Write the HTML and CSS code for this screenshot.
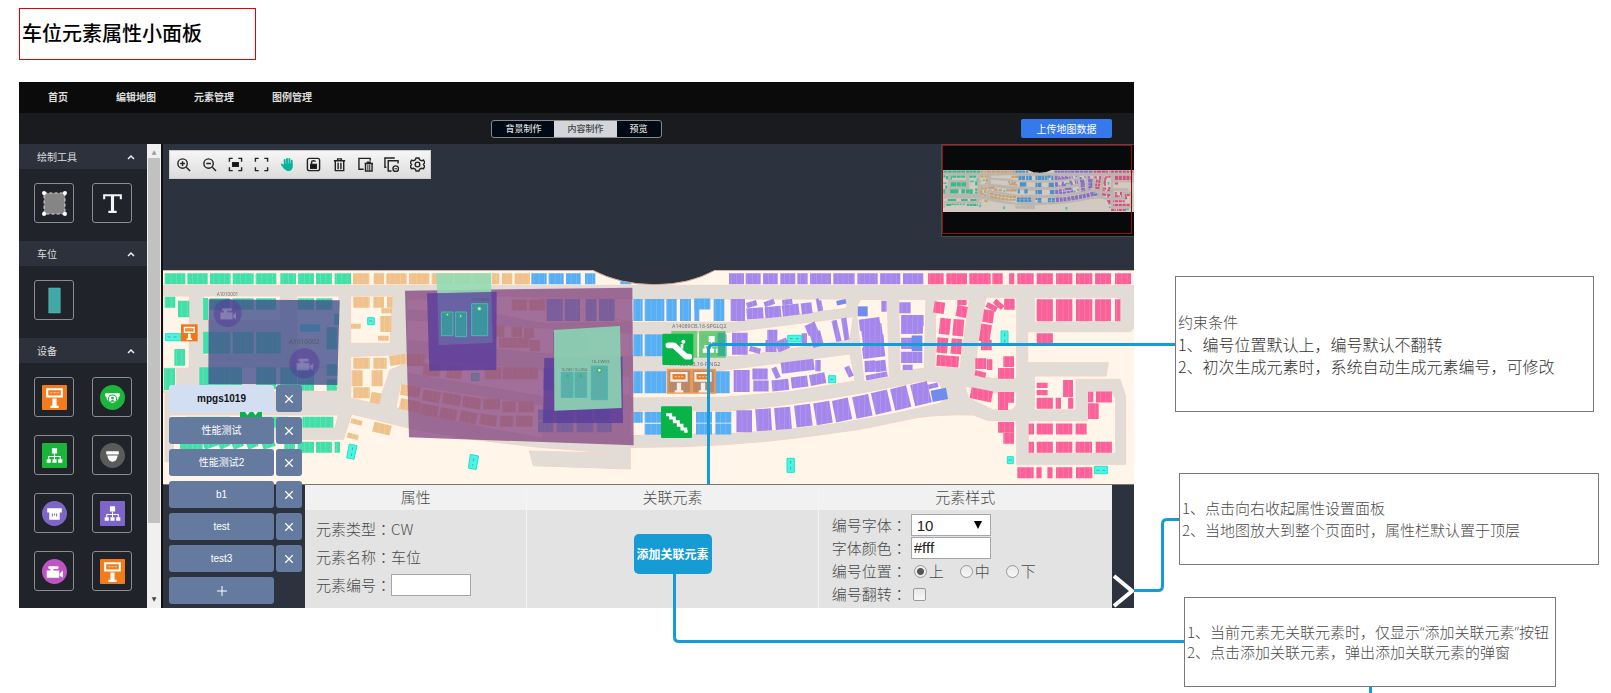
FILE: index.html
```html
<!DOCTYPE html>
<html lang="zh-CN">
<head>
<meta charset="utf-8">
<title>车位元素属性小面板</title>
<link rel="stylesheet" href="styles.css">
</head>
<body>
<svg class="defs" width="0" height="0" aria-hidden="true">
  <defs>
    <pattern id="pg" width="16" height="66" patternUnits="userSpaceOnUse"><path fill="#42e0a8" d="M0 0h16v66H0z"/><path stroke="#6aeabd" stroke-width="2" d="M1 0v66"/></pattern>
    <pattern id="po" width="16" height="66" patternUnits="userSpaceOnUse"><path fill="#efc18b" d="M0 0h16v66H0z"/><path stroke="#f5d0a4" stroke-width="2" d="M1 0v66"/></pattern>
    <pattern id="pb" width="16" height="66" patternUnits="userSpaceOnUse"><path fill="#58aef3" d="M0 0h16v66H0z"/><path stroke="#78c2f8" stroke-width="2" d="M1 0v66"/></pattern>
    <pattern id="pv" width="16" height="66" patternUnits="userSpaceOnUse"><path fill="#a587ec" d="M0 0h16v66H0z"/><path stroke="#b79df2" stroke-width="2" d="M1 0v66"/></pattern>
    <pattern id="pk" width="16" height="66" patternUnits="userSpaceOnUse"><path fill="#fa6199" d="M0 0h16v66H0z"/><path stroke="#fd82ae" stroke-width="2" d="M1 0v66"/></pattern>
  </defs>

  <symbol id="kiosk" viewBox="0 0 24 24">
    <path fill="#fff" d="M4 3h16v9H4zM10 13h4v7h-4zM8 20h8v2H8z"/>
    <path fill="#f27b1c" d="M6 5h12v5H6z"/><path fill="none" stroke="#fbd3ad" stroke-dasharray="2 1" d="M8 7.500h8"/>
  </symbol>
  <symbol id="network" viewBox="0 0 24 24">
    <path fill="#fff" d="M9.500 5h5v5h-5zM4.500 15.500h4v3.500h-4zM10 15.500h4v3.500h-4zM15.500 15.500h4v3.500h-4z"/>
    <path fill="none" stroke="#fff" d="M12 10v6M6.500 16v-3h11v3"/>
  </symbol>
  <symbol id="camera" viewBox="0 0 24 24">
    <path fill="#fff" d="M4.500 11h12v7h-12zM17 14l3-3v7l-3-2zM8 9h3v2H8z"/><rect x="6" y="7" width="10" height="2.500" rx="1" fill="#fff"/>
  </symbol>

  <symbol id="site" viewBox="9 30 2913 642" preserveAspectRatio="none">
    <path fill="#fff5e8" d="M9 30h2913v642H9z"/>
    <path class="road" d="M9 76H2922V195Q2920 215 2905 215H2603V308H2845L2838 348H2623V450H2748V358H2880L2897 410V613H2570V482H2485L2440 465Q2350 462 2270 473L2100 508L1940 530Q1700 562 1440 562H1411V627L1120 617L1108 573L1360 580L1120 560L950 540L750 505L575 462L550 538H40V605H15V397H9z"/>
    <g class="block">
      <path d="M9 108H88V325H9zM9 325H50V395H9zM130 108H362V182H130zM130 215H350L362 250V285H130zM118 322H535V395H118zM410 108H537V395H410zM30 465H535L525 505H30zM572 108H698L690 250H572zM572 290L740 283L720 318L690 330L655 433L572 415z"/>
      <path d="M722 372L740 373L1150 435V535L980 505L708 443zM740 118L1040 108L1420 117V187L1140 190L1020 165L740 150zM740 180L1420 220V290L1130 280L740 240zM740 290L1150 330L1430 350V405L1150 410L740 340z"/>
      <g transform="translate(1440)">
        <path d="M-300 117H620V145L280 187H-30zM-30 220H240L640 170L630 240L290 290H-30zM-30 333H230L630 282L645 363L450 395L250 412L-30 414zM-30 452H280Q560 425 850 362L895 365L920 410L900 430Q600 505 290 520L-30 527zM662 118H742L748 352L672 365L650 170V140z"/>
      </g>
      <g transform="translate(2100)">
        <path d="M116 118H198L193 325L120 333zM228 118H328L300 325L225 322zM378 112H470V355H395L345 345L355 230zM315 378L400 397H470V435L455 450H400L325 415zM523 112H780V187H523zM683 395H755L767 415V580H505V482H683z"/>
      </g>
    </g>
    <path fill="none" stroke="#f3cfc8" stroke-width="2" stroke-dasharray="12 6" d="M555 295v100M1115 596l240 10q35 0 37-34M2388 380l10 35"/>

    <g fill="none" stroke="url(#pg)">
      <path stroke-width="33" d="M14 56h62m6 0h61m7 0h62m6 0h63m6 0h62m12 0h47m6 0h48m6 0h48m8 0h49M14 127h32M60 562h68M373 562h32m8 0h49m6 0h48m8 0h16M427 487h93M285 487h100M80 487h130"/>
      <path stroke-width="50" d="M54 147h34M43 292h32"/>
      <path stroke-width="66" d="M12 358h33M129 248h82m7 0h63m7 0h74M129 147h15M118 355h128m42 0h60m13 0h50M500 235h32"/>
      <path stroke-width="34" d="M150 132h60m8 0h63m7 0h60m65 0h49m7 0h48M413 375h49m38 0h32M500 330h32M523 178h14M413 340h49"/>
      <path stroke-width="20" d="M132 560l40-14m6 14l30-14m10 14l30-12m14 12l30-12m16 12l36-12"/>
    </g>
    <g fill="none" stroke="url(#po)">
      <path stroke-width="33" d="M579 56h49m13 0h31m7 0h61m7 0h61m7 0h64m4 0h51m4 0h54m4 0h22m8 0h31m7 0h46M580 127h49m11 0h32m9 0h16M580 310h49M580 398h49M640 310h40M1055 135h45m8 0h48"/>
      <path stroke-width="48" d="M575 355h33m27 0h33M661 192h33"/>
      <path stroke-width="15" d="M664 152h32M573 199h29M654 235h32M573 482l33 8M562 525l33 8"/>
      <path stroke-width="30" d="M640 500l52 12M689 303l49-7M650 398l-6 32M1018 197v34M1054 216h32M1107 205v28M1017 248h92M1125 240v34"/>
      <path stroke-width="33" d="M722 388l58 10M720 430l59 12M788 404l52 10M780 446l54 10M848 413l54 10M840 457l50 10M908 423l54 10M900 467l50 10M970 432h50M960 476l50 8M1027 440h40m8 0h48M1020 484h40m8 0h50"/>
      <path stroke-width="36" d="M740 300h54M790 328l50 5M860 336l46 4M974 340h50m4 0h106"/>
    </g>
    <g fill="none" stroke="url(#pb)">
      <path stroke-width="33" d="M1114 56h46m6 0h45m7 0h44m13 0h31m75 0h33M1603 132h48M1420 472h28m6 0h56m-56 36h56M1608 472h48m10 0h48M1608 507h48m10 0h48M1134 465h46m10 0h50m10 0h45m10 0h45M1134 500h46m10 0h50m10 0h50m10 0h45"/>
      <path stroke-width="66" d="M1160 150h48m6 0h46m17 0h32m8 0h47M1420 150h28m6 0h59m6 0h31m10 0h33m10 0h15M1661 150h32M1420 256h28m6 0h56m110 0h80M1420 367h28m6 0h65m120 0h70M1150 357h30m70 0h50M1180 250h100"/>
    </g>
    <g transform="translate(1440)" fill="none" stroke="url(#pv)">
      <path stroke-width="33" d="M267 56h45m5 0h45m7 0h44m8 0h45m6 0h31m7 0h63m7 0h64m8 0h61m7 0h61m8 0h61M320 162l50-4M375 158l48-4M427 153l50-6M484 147l32-4"/>
      <path stroke-width="66" d="M272 150h43M276 251h47M281 363h48M289 484h47M348 481l46-3M405 477l48-4M466 470l48-6M525 463l48-8M582 455l48-10M643 444l48-10M700 432l48-11M758 420l48-12"/>
      <path stroke-width="66" d="M818 407l50-12"/>
      <path stroke-width="16" d="M320 137l30-9M373 134l30-10M427 128l30-4M329 265l32 9M538 121l-2 1l6 31M582 181l15 63M611 174l10 66M493 220v30M401 323l14 31M534 300v34M620 320l14 30M678 354l64-12M732 122v33M788 322l30 0"/>
      <path stroke-width="33" d="M382 226h30M393 240v36M410 262l34-14M500 213l30-13M524 215l12 45M337 342h46M340 378h46M424 325l98-12M396 378l50-5M454 369l49-6M510 362l46-9M778 143h34M783 205h54"/>
      <path stroke-width="34" d="M658 196l62-8M664 214l62-8M668 246l64-6M668 280l66-8M674 320l32-2M706 320l32-4M783 182h68M783 204h66M783 250h34M783 292h64"/>
    </g>
    <g fill="none" stroke="#718cec">
      <path stroke-width="14" d="M2030 130l28-6"/><path stroke-width="30" d="M2093 154h30"/><path stroke-width="47" d="M2255 250h32"/><path stroke-width="34" d="M2315 409l46-9"/>
    </g>
    <path fill="none" stroke="url(#pv)" stroke-width="14" d="M2302 382l32-8"/>
    <g transform="translate(2100)" fill="none" stroke="url(#pk)">
      <path stroke-width="33" d="M204 56h47m8 0h62m7 0h64m5 0h31m19 0h16m9 0h49m9 0h49m9 0h49m11 0h49m8 0h48m12 0h48M432 133h32M530 236h49M530 430h49m8 0h16m21 0h16M506 507h16m8 0h49m9 0h49m10 0h33M506 562h16m8 0h49m9 0h49m10 0h49m11 0h49M472 638h49m8 0h16m17 0h16m10 0h49m11 0h49M708 411h48M230 301l66 5M332 398l64 13"/>
      <path stroke-width="66" d="M530 151h49m9 0h49m11 0h49m8 0h48m12 0h16"/>
      <path stroke-width="32" d="M240 126l-5 34M308 138l-6 33M257 175l-5 48M297 178l-4 50M249 233l-4 46M291 236l-4 46M388 150l-6 38M380 193l-8 52M363 255h32M346 311h33M381 314h16M430 305h32M414 340h48M414 412h48M414 434h30M414 502h48M430 535h32M609 376h30M609 395h30M700 430v47M684 411h16"/>
      <path stroke-width="16" d="M292 128h28M380 133l30 16M404 122l24 22M345 338l32 8M530 376h33M530 398h33"/>
    </g>
    <g fill="#48f6e2" stroke="#20e4d0" stroke-width="3">
      <path d="M16 221h47v21H16zM623 173h20v21h-20zM422 195h56v18h-56zM568 552l23 5-9 41-22-5zM931 583l25 5-8 41-23-5zM1883 226h41v20h-41zM2006 347h21v21h-21zM1881 595h22v42h-22zM2523 213h21v38h-21zM2542 590h18v21h-18zM2803 619h39v22h-39zM935 340h22v22h-22z"/>
    </g>
    <path fill="none" stroke="#52a6b4" stroke-width="3" stroke-dasharray="9 9" d="M23 231h38M628 183h10M578 562l-4 26M942 595l-5 22M1889 236h30M2011 358h12M1892 602v30M2534 220v28M2546 600h12M2809 631h30"/>
  </symbol>
</svg>

<main class="board">
  <h1 class="board-title">车位元素属性小面板</h1>
  <div class="stage">
    <section class="app">
      <nav class="topnav">
        <a href="#">首页</a><a href="#">编辑地图</a><a href="#">元素管理</a><a href="#">图例管理</a>
      </nav>
      <div class="subbar">
        <div class="segments">
          <button type="button">背景制作</button><button type="button" class="on">内容制作</button><button type="button">预览</button>
        </div>
        <button type="button" class="upload">上传地图数据</button>
      </div>
      <div class="workspace">
        <aside class="sidebar">
          <h2>绘制工具 <svg viewBox="0 0 8 6"><path d="M1 5l3-3 3 3"/></svg></h2>
          <div class="tools">
            <button type="button" aria-label="区域"><svg viewBox="0 0 24 24"><path fill="#858585" d="M2 2h20v20H2z"/><path fill="none" stroke="#ddd" stroke-dasharray="3 2" d="M2 2h20v20H2z"/><g fill="#fff"><circle cx="2" cy="2" r="2"/><circle cx="22" cy="2" r="2"/><circle cx="2" cy="22" r="2"/><circle cx="22" cy="22" r="2"/></g></svg></button>
            <button type="button" aria-label="文本"><svg viewBox="0 0 24 24"><path fill="none" stroke="#f4f4f4" stroke-width="2" d="M4 8V4h16v4M8 20h8"/><path stroke="#f4f4f4" stroke-width="3" d="M12 4v16"/></svg></button>
          </div>
          <h2>车位 <svg viewBox="0 0 8 6"><path d="M1 5l3-3 3 3"/></svg></h2>
          <div class="tools">
            <button type="button" aria-label="车位"><svg viewBox="0 0 26 26"><path fill="#40a9a6" stroke="#66c6c2" stroke-width=".5" d="M7 0h12v26H7z"/></svg></button>
          </div>
          <h2>设备 <svg viewBox="0 0 8 6"><path d="M1 5l3-3 3 3"/></svg></h2>
          <div class="tools devices">
            <button type="button" aria-label="查询机"><svg viewBox="0 0 24 24"><rect width="24" height="24" rx="1" fill="#f27b1c"/><use href="#kiosk"/></svg></button>
            <button type="button" aria-label="球机"><svg viewBox="0 0 24 24"><circle cx="12" cy="12" r="12" fill="#1cb53c"/><path fill="#fff" d="M5 8h14v3h-1a6 6 0 0 1-12 0H5z"/><circle cx="12" cy="13.500" r="4" fill="#fff" stroke="#1cb53c"/><circle cx="12" cy="12.500" r="1.300" fill="#1cb53c"/><path fill="#1cb53c" d="M9.500 16q2.500-3 5 0z"/></svg></button>
            <button type="button" aria-label="网络设备"><svg viewBox="0 0 24 24"><rect width="24" height="24" rx="1" fill="#1cb53c"/><use href="#network"/></svg></button>
            <button type="button" aria-label="半球"><svg viewBox="0 0 24 24"><circle cx="12" cy="12" r="12" fill="#5b5b5b"/><path fill="#fff" d="M6 8h12v3H6zM7 12h10q-1 6-5 6t-5-6z"/></svg></button>
            <button type="button" aria-label="探测器"><svg viewBox="0 0 24 24"><circle cx="12" cy="12" r="12" fill="#7e66c8"/><path fill="#fff" d="M5 7h14v4H5zM7 11h10v7H7z"/><path stroke="#7e66c8" d="M10 12v3M12 12v2M14 12v3"/></svg></button>
            <button type="button" aria-label="交换机"><svg viewBox="0 0 24 24"><rect width="24" height="24" rx="1" fill="#7e66c8"/><use href="#network"/></svg></button>
            <button type="button" aria-label="摄像机"><svg viewBox="0 0 24 24"><circle cx="12" cy="12" r="12" fill="#bd56c4"/><use href="#camera"/></svg></button>
            <button type="button" aria-label="缴费机"><svg viewBox="0 0 24 24"><rect width="24" height="24" rx="1" fill="#f27b1c"/><use href="#kiosk"/></svg></button>
          </div>
        </aside>
        <div class="scrollbar"><span class="arrow">▲</span><span class="thumb"></span><span class="rail"></span><span class="arrow down">▼</span></div>

        <div class="canvas">
          <div class="canvas-top">
            <div class="toolbar">
              <button type="button" aria-label="放大"><svg viewBox="0 0 16 16"><circle cx="7" cy="7" r="5"/><path d="M11 11l4 4M4.500 7h5M7 4.500v5"/></svg></button>
              <button type="button" aria-label="缩小"><svg viewBox="0 0 16 16"><circle cx="7" cy="7" r="5"/><path d="M11 11l4 4M4.500 7h5"/></svg></button>
              <button type="button" aria-label="适应"><svg viewBox="0 0 16 16"><path d="M1.500 5V1.500H5M11 1.500h3.500V5M14.500 11v3.500H11M5 14.500H1.500V11"/><path fill="#111" d="M5 6h6v4H5z"/></svg></button>
              <button type="button" aria-label="全屏"><svg viewBox="0 0 16 16"><path d="M1.500 5V1.500H5M11 1.500h3.500V5M14.500 11v3.500H11M5 14.500H1.500V11"/></svg></button>
              <button type="button" aria-label="移动"><svg viewBox="0 0 16 16"><path stroke="#08b39c" stroke-width="2" stroke-linecap="round" d="M5 9V3M7.500 9V2M10 9V2M12.500 9V4M2 8l3 4"/><path fill="#08b39c" stroke="none" d="M4 7h9.500v4q-1 4-4 4H8q-3-1-4-4z"/></svg></button>
              <button type="button" aria-label="锁定"><svg viewBox="0 0 16 16"><rect x="1.500" y="1.500" width="13" height="13" rx="2"/><path fill="#111" d="M5 8h6v4H5z"/><path d="M6 8V5q0-1 2-1t2 1"/></svg></button>
              <button type="button" aria-label="删除"><svg viewBox="0 0 16 16"><path d="M2 4h12M6 4V2h4v2M3.500 4v10.500h9V4M6.500 6v7M9.500 6v7"/></svg></button>
              <button type="button" aria-label="删除区域"><svg viewBox="0 0 16 16"><path d="M13 4V1.500H1V13h5M7 7h9M10 7V5.500h3V7M8 7v8h7V7"/><path stroke-width="1" d="M10.500 8v6M12.500 8v6"/></svg></button>
              <button type="button" aria-label="移除图层"><svg viewBox="0 0 16 16"><path d="M2.500 11H1V1h10.500M15 7V4H4.500v11H8"/><circle cx="12.500" cy="12.500" r="3"/><path stroke-width="1" d="M11 12.500h3"/></svg></button>
              <button type="button" aria-label="设置"><svg viewBox="0 0 16 16"><path d="M6.500 1h3l.7 2 2.300.9 2-.5 1.200 2.500L14.300 8l1.400 2-1.300 2.400-2.200-.3-2 .9-.7 2h-3l-.8-2-2-.9-2.200.3L.3 10l1.400-2L.3 6l1.300-2.500 2.100.5 2-1z"/><circle cx="8" cy="8" r="2.500"/></svg></button>
            </div>
          </div>
          <svg class="site" viewBox="9 30 2913 642">
            <use href="#site" x="9" y="30" width="2913" height="642"/>
            <path fill="#2c323e" d="M1298 30Q1380 73 1484 73T1665 30z"/>
            <path fill="none" stroke="#c9a49a" stroke-width="3" d="M9 31H1298Q1380 74 1484 74T1665 31H2922"/>
            <path fill="#43508c" opacity=".8" d="M146 118l393 3-7 254-387-3z"/>
            <g opacity=".55"><circle cx="203" cy="159" r="42" fill="#5a3d9b"/><circle cx="433" cy="310" r="45" fill="#5a3d9b"/><g opacity=".4"><use href="#camera" x="168" y="124" width="72" height="72"/><use href="#camera" x="396" y="274" width="76" height="76"/></g></g>
            <g class="map-label"><text x="170" y="107" font-size="14">A1010001</text><text x="386" y="252" font-size="20">A1010002</text></g>
            <path fill="#ef7717" d="M63 193h50v51H63z"/><use href="#kiosk" x="63" y="194" width="50" height="50"/>
            <path fill="#08b447" d="M240 430h66v60h-66z"/><path fill="#fff" d="M252 450l10 16 12-16zM276 450l10 16 12-16z"/>
            <path fill="#84447f" opacity=".76" d="M735 92L1417 83L1421 556L747 532z"/>
            <path fill="#55399c" opacity=".75" d="M801 100L1010 95L1009 330L808 332zM1153 294L1387 290L1389 489H1149z"/>
            <path fill="#92dcb4" opacity=".88" d="M828 40H994V96L832 100z"/>
            <path fill="#6a7db0" opacity=".5" d="M832 100L994 96L998 248L836 256z"/>
            <path fill="#8ccfb2" opacity=".95" d="M1182 210L1380 198L1385 444L1183 452z"/>
            <g fill="#3f929f" stroke="#48b9b0" stroke-width="3"><path d="M844 156h35v71h-35zM886 156h34v74h-34zM935 131h48v96h-48z"/><path fill="#5cafa9" d="M1204 337h35v75h-35zM1245 337h35v75h-35zM1294 318h48v101h-48z"/></g>
            <g fill="#e3f5ec" stroke="#35b46e" stroke-width="4"><circle cx="862" cy="164" r="4"/><circle cx="902" cy="168" r="4"/><circle cx="958" cy="146" r="6"/><circle cx="1318" cy="331" r="6"/><circle cx="1222" cy="348" r="3"/><circle cx="1262" cy="348" r="3"/></g>
            <g class="map-label"><text x="935" y="124" font-size="13">16-CW05</text><text x="1294" y="308" font-size="13">16-CW03</text><text x="1204" y="332" font-size="9">16-CW01 16-CW04</text><text x="1536" y="204" font-size="16">A14089CB,16-SPGLQ2</text><text x="1530" y="318" font-size="16">A14089CB,16-PJNG2</text></g>
            <path fill="#69c96f" opacity=".93" d="M1534 213h78v80h-78zM1617 213h80v80h-80z"/><use href="#network" x="1612" y="210" width="86" height="86"/>
            <path fill="#3bb08d" d="M1673 218h22v70h-22z"/>
            <rect x="1507" y="221" width="93" height="94" rx="4" fill="#08b447"/><path fill="none" stroke="#fff" stroke-width="17" stroke-linecap="round" stroke-linejoin="round" d="M1525 256h17l36 34h10"/><circle cx="1570" cy="245" r="6" fill="#fff"/><path stroke="#fff" stroke-width="8" d="M1566 252v14"/>
            <path fill="#b98a6a" stroke="#ee9955" stroke-width="5" d="M1523 329h70v70h-70zM1597 329h68v70h-68z"/><g opacity=".85"><use href="#kiosk" x="1518" y="326" width="78" height="78"/><use href="#kiosk" x="1590" y="326" width="78" height="78"/></g>
            <rect x="1503" y="439" width="93" height="95" rx="4" fill="#08b447"/><path fill="none" stroke="#fff" stroke-width="9" d="M1518 464h14v10h11v11h12v11h11v11h11v7h6"/>
          </svg>
          <div class="bottom">
            <div class="panel">
              <section class="col basic">
                <h3>属性</h3>
                <div class="body">
                  <p>元素类型<span class="colon">：</span>CW</p>
                  <p>元素名称<span class="colon">：</span>车位</p>
                  <p><label for="code">元素编号<span class="colon">：</span></label><input id="code" type="text" class="code"></p>
                </div>
              </section>
              <section class="col related">
                <h3>关联元素</h3>
                <div class="body"><button type="button" class="add">添加关联元素</button></div>
              </section>
              <section class="col style">
                <h3>元素样式</h3>
                <div class="body">
                  <div class="row"><label for="size">编号字体<span class="colon">：</span></label><span class="select"><select id="size"><option>10</option><option>12</option></select></span></div>
                  <div class="row"><label for="color">字体颜色<span class="colon">：</span></label><input id="color" type="text" value="#fff"></div>
                  <div class="row"><span>编号位置<span class="colon">：</span></span><span class="radios"><label><input type="radio" name="pos" checked>上</label><label><input type="radio" name="pos">中</label><label><input type="radio" name="pos">下</label></span></div>
                  <div class="row"><label for="flip">编号翻转<span class="colon">：</span></label><input id="flip" type="checkbox"></div>
                </div>
              </section>
            </div>
            <button type="button" class="collapse" aria-label="收起"><svg viewBox="0 0 22 34"><path d="M2 2l18 15L2 32"/></svg></button>
          </div>

          <div class="minimap"><svg viewBox="9 30 2913 642"><use href="#site" x="9" y="30" width="2913" height="642"/><path fill="#07090b" d="M1298 28Q1380 73 1484 73T1665 28z"/></svg><span class="viewport"></span></div>
          <div class="floors">
            <div><button type="button" class="on">mpgs1019</button><button type="button" class="x" aria-label="删除 mpgs1019"><svg viewBox="0 0 8 8"><path d="M1 1l6 6M7 1L1 7"/></svg></button></div>
            <div><button type="button">性能测试</button><button type="button" class="x" aria-label="删除 性能测试"><svg viewBox="0 0 8 8"><path d="M1 1l6 6M7 1L1 7"/></svg></button></div>
            <div><button type="button">性能测试2</button><button type="button" class="x" aria-label="删除 性能测试2"><svg viewBox="0 0 8 8"><path d="M1 1l6 6M7 1L1 7"/></svg></button></div>
            <div><button type="button">b1</button><button type="button" class="x" aria-label="删除 b1"><svg viewBox="0 0 8 8"><path d="M1 1l6 6M7 1L1 7"/></svg></button></div>
            <div><button type="button">test</button><button type="button" class="x" aria-label="删除 test"><svg viewBox="0 0 8 8"><path d="M1 1l6 6M7 1L1 7"/></svg></button></div>
            <div><button type="button">test3</button><button type="button" class="x" aria-label="删除 test3"><svg viewBox="0 0 8 8"><path d="M1 1l6 6M7 1L1 7"/></svg></button></div>
            <div><button type="button" aria-label="新增"><svg class="plus" viewBox="0 0 10 10"><path d="M5 0v10M0 5h10"/></svg></button></div>
          </div>
        </div>
      </div>
    </section>

    <div class="notes">
      <div class="note first"><p>约束条件</p><p class="big">1、编号位置默认上，编号默认不翻转</p><p class="big">2、初次生成元素时，系统自动生成元素编号，可修改</p></div>
      <div class="note second"><p>1、点击向右收起属性设置面板</p><p>2、当地图放大到整个页面时，属性栏默认置于顶层</p></div>
      <div class="note third"><p>1、当前元素无关联元素时，仅显示<span class="quote">“</span>添加关联元素<span class="quote">”</span>按钮</p><p>2、点击添加关联元素，弹出添加关联元素的弹窗</p></div>
    </div>
  </div>
  <svg class="links" viewBox="0 0 1611 693" preserveAspectRatio="none" aria-hidden="true">
    <path d="M1175 344.500H714Q708.500 344.500 708.500 350V484M1134 590.500H1158Q1162.500 590.500 1162.500 586V524Q1162.500 519.500 1167 519.500H1179M674.500 574V637Q674.500 641.500 679 641.500H1184M1370.500 687V693"/>
  </svg>
</main>
</body>
</html>
```
FILE: styles.css
```css
* { box-sizing: border-box; }
body {
  margin: 0;
  background: #fff;
  color: #4a4a4a;
  font: 15px/22px "Noto Sans CJK SC", "Noto Sans", sans-serif;
  font-weight: 300;
  text-spacing-trim: space-all;
}
h1, h2, h3, p { margin: 0; font-weight: inherit; }
button, input, select { font: inherit; margin: 0; padding: 0; border: 0; color: inherit; }
button { display: flex; align-items: center; justify-content: center; background: none; white-space: nowrap; }
a { color: inherit; text-decoration: none; }
.defs { position: absolute; }

.board { position: relative; padding: 8px 11px 6px 19px; }
.board-title {
  width: 237px;
  padding: 9px 2px 11px;
  border: 1px solid #e60000;
  color: #000;
  font-size: 20px;
  line-height: 30px;
  font-weight: 500;
}
.stage { display: flex; align-items: flex-start; gap: 41px; margin-top: 22px; }
.links { position: absolute; inset: 0; width: 100%; height: 100%; pointer-events: none; }
.links path { fill: none; stroke: #169bd5; stroke-width: 3; }

.app { flex: 1; min-width: 0; background: #1a1b1f; color: #ddd; font-size: 10px; line-height: 16px; }
.topnav { display: flex; height: 31px; background: #0b0b0b; font-weight: 700; }
.topnav a { width: 78px; text-align: center; line-height: 29px; }
.subbar { display: grid; grid-template-columns: 1fr auto 1fr; align-items: center; height: 31px; }
.segments { grid-column: 2; display: flex; height: 18px; border: 1px solid #85888c; border-radius: 3px; overflow: hidden; background: #010914; font-size: 9px; font-weight: 500; }
.segments button { padding: 0 13px; }
.segments .on { background: #d3d5da; color: #444; }
.upload { justify-self: end; width: 91px; height: 19px; margin-right: 22px; border-radius: 2px; background: #3679ed; color: #fff; font-weight: 400; }

.workspace { display: flex; align-items: stretch; }
.sidebar { width: 128px; background: #20232a; }
.sidebar h2 { display: flex; align-items: center; justify-content: space-between; height: 25px; padding: 0 12px 0 18px; background: #2d313c; font-size: 10px; font-weight: 400; }
.sidebar h2 svg { width: 8px; fill: none; stroke: #eee; stroke-width: 1.5; }
.tools { display: grid; grid-template-columns: 40px 40px; gap: 18px; padding: 14px 15px 18px; }
.devices { padding-bottom: 0; }
.tools button { width: 40px; height: 40px; border: 1px solid #8b8c8f; border-radius: 3px; }
.tools svg { width: 25px; height: 25px; overflow: visible; }
.scrollbar { display: flex; flex-direction: column; width: 16px; padding: 0 1px; background: #f0f0f0; border-right: 2px solid #111; }
.scrollbar .arrow { height: 14px; color: #999; font: 6px/16px "DejaVu Sans", sans-serif; text-align: center; }
.scrollbar .down { color: #444; line-height: 10px; }
.scrollbar .thumb { flex: 364; background: #c1c1c1; }
.scrollbar .rail { flex: 71; }

.canvas { position: relative; flex: 1; min-width: 0; display: flex; flex-direction: column; background: #2c323e; }
.canvas-top { height: 126px; padding: 6px; }
.toolbar { display: inline-flex; height: 29px; background: linear-gradient(#f6f6f6, #dcdcdc); border: 1px solid #ccc; }
.toolbar button { width: 26px; height: 27px; }
.toolbar svg { width: 15px; height: 15px; fill: none; stroke: #222; stroke-width: 1.5; }
.site { display: block; width: 100%; }
.road { fill: #e1ddd6; stroke: #f3d3ca; stroke-width: 3; }
.block { fill: #fff5e8; stroke: #f3d3ca; stroke-width: 3; }
.map-label { fill: #555; font-family: "Noto Sans", sans-serif; font-weight: 400; opacity: .8; }
.bottom { display: flex; height: 124px; padding-left: 142px; border-top: 1px solid #777; }
.panel { flex: 1; display: flex; background: #e3e3e3; color: #4a4a4a; font-size: 15px; line-height: 22px; }
.col h3 { height: 25px; background: #f1f1f1; font-size: 15px; line-height: 24px; text-align: center; }
.basic { flex: 222; }
.related { flex: 291; border-left: 1px solid #f4f4f4; }
.style { flex: 294; border-left: 1px solid #f4f4f4; }
.colon { display: inline-block; width: 15px; font-family: "Noto Sans CJK TC", sans-serif; }
.basic .body { padding: 5px 11px; }
.basic p { display: flex; align-items: center; height: 28px; }
.panel input[type="text"], .panel select { width: 80px; height: 22px; border: 1px solid #a6a6a6; background: #fff; border-radius: 0; color: #222; font-family: "Liberation Sans", "Noto Sans CJK SC", sans-serif; }
.panel .code { width: 77px; height: 23px; }
.related .body { padding-top: 24px; }
.add { width: 78px; height: 40px; margin: 0 auto; border-radius: 5px; background: #169bd5; color: #fff; font-size: 12px; font-weight: 700; }
.style .body { display: grid; gap: 1px; padding: 4px 13px; }
.row { display: flex; align-items: center; gap: 4px; height: 22px; }
.panel #color { padding-left: 2px; }
.select { position: relative; display: flex; }
.select::after { content: ""; position: absolute; right: 9px; top: 7px; border: 4px solid transparent; border-top: 8px solid #000; border-bottom: 0; pointer-events: none; }
.panel select { appearance: none; padding-left: 5px; }
.radios { display: flex; gap: 16px; padding-left: 3px; }
.radios label { display: flex; align-items: center; gap: 2px; }
input[type="radio"], input[type="checkbox"] { appearance: none; width: 13px; height: 13px; border: 1px solid #999; background: linear-gradient(#e8e8e8, #f7f7f7); border-radius: 50%; }
input[type="radio"]:checked { background: radial-gradient(circle, #555 3px, #eee 4px); }
input[type="checkbox"] { margin-left: 2px; border-radius: 2px; }
.collapse { width: 22px; align-items: flex-end; }
.collapse svg { width: 22px; height: 34px; fill: none; stroke: #fff; stroke-width: 4; }

.minimap { position: absolute; top: 0; right: 0; width: 193px; height: 93px; padding: 25px 0 0 1px; border: 1px solid #4d4b4b; border-right: 0; background: #07090b; }
.minimap svg { display: block; width: 100%; opacity: .82; }
.viewport { position: absolute; inset: 0 2px 2px 0; border: 1px solid #8c1216; }
.floors { position: absolute; left: 6px; bottom: 4px; display: grid; gap: 5px; font-weight: 400; color: #fff; font-size: 10px; font-family: "Liberation Sans", "Noto Sans CJK SC", sans-serif; }
.floors div { display: flex; gap: 2px; }
.floors button { width: 105px; height: 27px; border-radius: 3px; background: #647a9f; }
.floors .on { background: #d2dff2; color: #111; font-weight: 700; }
.floors .x { width: 26px; }
.floors svg { width: 10px; height: 10px; fill: none; stroke: #fff; stroke-width: 1; overflow: visible; }

.notes { width: 425px; margin-top: 194px; }
.note { border: 1px solid #797979; background: #fff; padding: 0 2px; white-space: nowrap; }
.quote { font-family: "Open Sans", sans-serif; }
.first { padding-block: 34px; margin-right: 6px; }
.big { font-size: 16px; color: #333; }
.second { padding-block: 23px; margin: 61px 1px 0 4px; }
.third { padding-block: 24px; margin: 32px 44px 0 9px; line-height: 20px; }
```
